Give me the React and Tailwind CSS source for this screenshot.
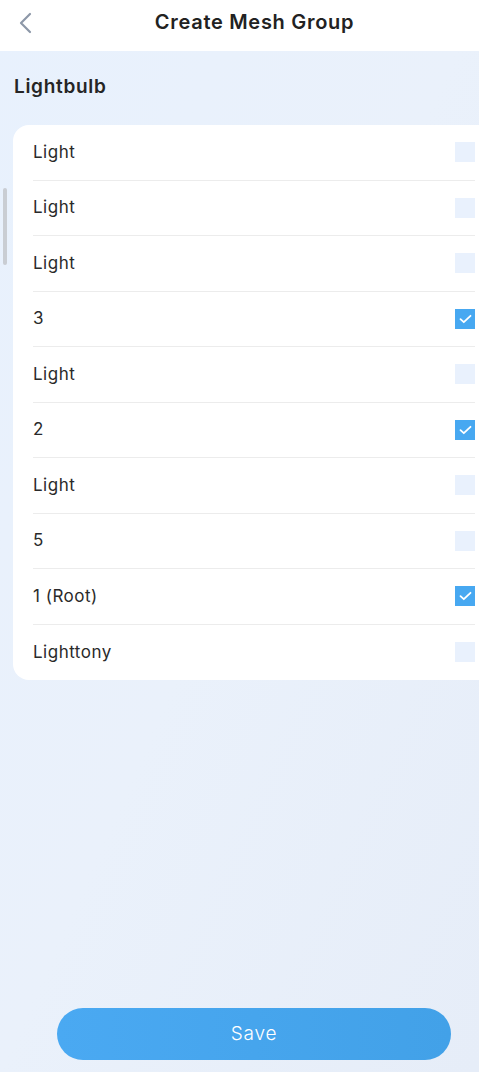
import React, { useState } from "react";

const initialDevices = [
  { name: "Light", checked: false },
  { name: "Light", checked: false },
  { name: "Light", checked: false },
  { name: "3", checked: true },
  { name: "Light", checked: false },
  { name: "2", checked: true },
  { name: "Light", checked: false },
  { name: "5", checked: false },
  { name: "1 (Root)", checked: true },
  { name: "Lighttony", checked: false },
];

export default function App() {
  const [devices, setDevices] = useState(initialDevices);

  const toggle = (i) =>
    setDevices((list) =>
      list.map((d, idx) => (idx === i ? { ...d, checked: !d.checked } : d))
    );

  return (
    <div className="relative w-[479px] h-[1072px] overflow-hidden flex flex-col bg-gradient-to-br from-[#e8f1fd] via-[#eaf1fb] to-[#e6edf8] font-['Inter','Noto_Sans',sans-serif] text-[#222]">
      <header className="h-[51px] shrink-0 bg-white flex items-center relative">
        <button className="absolute left-[14px] top-[10px] w-[22px] h-[26px] flex items-center justify-center">
          <svg width="16" height="22" viewBox="0 0 16 22" fill="none">
            <path
              d="M13 2 L4 11 L13 20"
              stroke="#8d98a8"
              strokeWidth="2.2"
              strokeLinecap="round"
              strokeLinejoin="round"
            />
          </svg>
        </button>
        <h1 className="w-full text-center pl-[30px] text-[20px] font-semibold text-[#222] tracking-[0.7px] -mt-[8px]">
          Create Mesh Group
        </h1>
      </header>

      {/* scroll indicator */}
      <div className="absolute left-[3px] top-[188px] w-[4px] h-[77px] rounded-full bg-[#c9cdd3]" />

      <main className="flex-1 flex flex-col pl-[13px]">
        <h2 className="mt-[24px] pl-[1px] text-[19px] font-semibold text-[#252525] leading-[24px] tracking-[0.7px]">
          Lightbulb
        </h2>

        <div className="mt-[26px] bg-white rounded-l-[16px] pl-[20px] pr-[4px]">
          {devices.map((d, i) => (
            <div
              key={i}
              onClick={() => toggle(i)}
              className={`h-[55.5px] flex items-center justify-between cursor-pointer ${
                i < devices.length - 1 ? "border-b border-[#ececec]" : ""
              }`}
            >
              <span className="text-[17px] text-[#2a2a2a] tracking-[0.5px] whitespace-pre">
                {d.name}
              </span>
              {d.checked ? (
                <span className="w-[20px] h-[20px] bg-[#47a8f1] flex items-center justify-center">
                  <svg width="13" height="10" viewBox="0 0 13 10" fill="none">
                    <path
                      d="M1.5 5.2 L4.8 8.2 L11.5 1.8"
                      stroke="white"
                      strokeWidth="1.8"
                      strokeLinecap="round"
                      strokeLinejoin="round"
                    />
                  </svg>
                </span>
              ) : (
                <span className="w-[20px] h-[20px] bg-[#e9f1fd]" />
              )}
            </div>
          ))}
        </div>

        <div className="flex-1" />

        <div className="pb-[12px] pl-[44px] pr-[28px]">
          <button className="w-full h-[52px] rounded-full bg-gradient-to-r from-[#4aa9f2] to-[#42a1e8] text-white text-[19px] font-light tracking-[0.8px]">
            Save
          </button>
        </div>
      </main>
    </div>
  );
}
